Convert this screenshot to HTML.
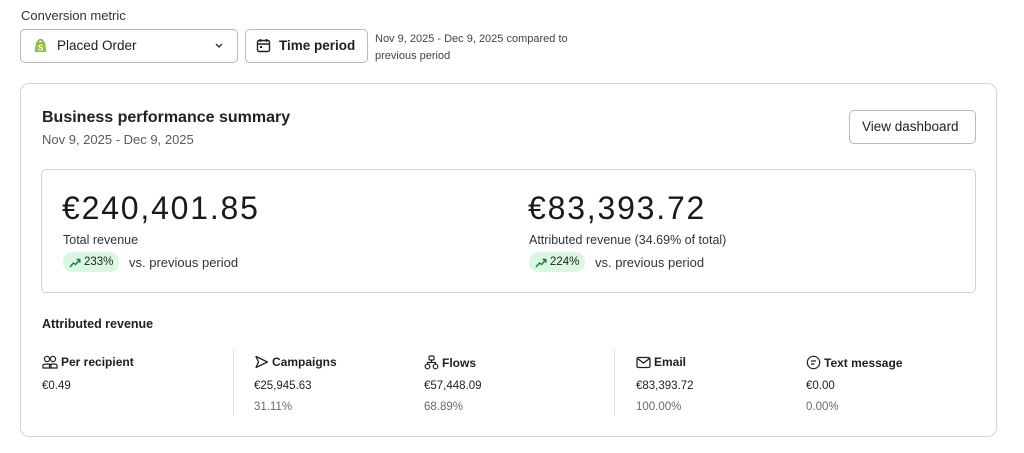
<!DOCTYPE html>
<html><head><meta charset="utf-8"><style>
*{box-sizing:border-box;margin:0;padding:0}
body{width:1024px;height:453px;background:#fff;font-family:"Liberation Sans",sans-serif;color:#1f1f1f;position:relative;overflow:hidden}
.a{position:absolute;white-space:nowrap}
.box{position:absolute;border:1px solid #b8b8b8;border-radius:5px;background:#fff}
.g{color:#5a5a5a}
.pill{position:absolute;background:#d9f7e2;border-radius:9px;height:20px;font-size:11.5px;color:#1f1f1f;padding:0 6px 0 6px;line-height:20px}
.pill svg{vertical-align:-3px;margin-right:3px}
.h{font-size:12px;font-weight:bold}
.h svg{vertical-align:-3px;margin-right:3px}
.v{font-size:11.5px}
.p{font-size:11.5px;color:#6a6a6a}
.div{position:absolute;width:1px;background:#e3e3e3;top:348px;height:68px}
</style></head><body>
<div class="a" style="left:21px;top:8px;font-size:13px;color:#333">Conversion metric</div>
<div class="box" style="left:20px;top:29px;width:218px;height:34px"></div>
<svg class="a" style="left:34px;top:38px" width="13" height="15" viewBox="0 0 13 15"><path d="M2 4 L11 4 L12.5 14 L0.5 14 Z" fill="#95bf47"/><path d="M4 4 C4 1 9 1 9 4" stroke="#5e8e3e" stroke-width="1.3" fill="none"/><text x="4" y="12.5" font-size="8" font-weight="bold" fill="#fff" font-family="Liberation Sans">S</text></svg>
<div class="a" style="left:57px;top:38px;font-size:13.5px">Placed Order</div>
<svg class="a" style="left:214px;top:42px" width="10" height="8" viewBox="0 0 10 8"><path d="M2 2 L5 5 L8 2" stroke="#333" stroke-width="1.4" fill="none"/></svg>
<div class="box" style="left:245px;top:29px;width:123px;height:34px"></div>
<svg class="a" style="left:256px;top:38px" width="15" height="15" viewBox="0 0 15 15"><rect x="1.5" y="2.5" width="12" height="11" rx="1.5" stroke="#222" stroke-width="1.4" fill="none"/><path d="M4.5 1v3M10.5 1v3M1.5 6h12" stroke="#222" stroke-width="1.4"/><rect x="4" y="8" width="2" height="2" fill="#222"/></svg>
<div class="a" style="left:279px;top:38px;font-size:13.5px;font-weight:bold">Time period</div>
<div class="a" style="left:375px;top:31px;font-size:11px;line-height:17px;color:#444">Nov 9, 2025 - Dec 9, 2025 compared to<br>previous period</div>

<div class="a" style="left:20px;top:83px;width:977px;height:354px;border:1px solid #d4d4d4;border-radius:9px"></div>
<div class="a" style="left:42px;top:109px;font-size:16px;font-weight:bold;color:#222">Business performance summary</div>
<div class="a g" style="left:42px;top:132px;font-size:13px">Nov 9, 2025 - Dec 9, 2025</div>
<div class="box" style="left:849px;top:110px;width:127px;height:34px"></div>
<div class="a" style="left:862px;top:119px;font-size:13.5px;color:#222">View dashboard</div>

<div class="a" style="left:41px;top:169px;width:935px;height:124px;border:1px solid #d4d4d4;border-radius:5px"></div>
<div class="a" style="left:62px;top:190px;font-size:32px;color:#1a1a1a;letter-spacing:1.8px">€240,401.85</div>
<div class="a" style="left:63px;top:233px;font-size:12.5px;color:#333">Total revenue</div>
<div class="pill" style="left:63px;top:252px"><svg width="12" height="10" viewBox="0 0 12 10"><path d="M1 9 L4.5 5 L6.5 6.5 L10.5 2 M7.5 1.5 H10.8 V4.8" stroke="#1a7f37" stroke-width="1.4" fill="none"/></svg>233%</div>
<div class="a" style="left:129px;top:255px;font-size:13px;color:#333">vs. previous period</div>
<div class="a" style="left:528px;top:190px;font-size:32px;color:#1a1a1a;letter-spacing:1.8px">€83,393.72</div>
<div class="a" style="left:529px;top:233px;font-size:12.5px;color:#333">Attributed revenue (34.69% of total)</div>
<div class="pill" style="left:529px;top:252px"><svg width="12" height="10" viewBox="0 0 12 10"><path d="M1 9 L4.5 5 L6.5 6.5 L10.5 2 M7.5 1.5 H10.8 V4.8" stroke="#1a7f37" stroke-width="1.4" fill="none"/></svg>224%</div>
<div class="a" style="left:595px;top:255px;font-size:13px;color:#333">vs. previous period</div>

<div class="a" style="left:42px;top:317px;font-size:12.5px;font-weight:bold;color:#222">Attributed revenue</div>
<div class="div" style="left:233px"></div>
<div class="div" style="left:614px"></div>

<div class="a h" style="left:42px;top:355px"><svg width="16" height="14" viewBox="0 0 16 14"><circle cx="5" cy="4" r="2.6" stroke="#222" stroke-width="1.2" fill="none"/><circle cx="11" cy="4" r="2.6" stroke="#222" stroke-width="1.2" fill="none"/><path d="M1 13 V10.5 C1 8.5 9 8.5 9 10.5 V13 Z M7.5 13 V10.5 C7.5 8.5 15 8.5 15 10.5 V13 Z" stroke="#222" stroke-width="1.2" fill="none"/></svg>Per recipient</div>
<div class="a v" style="left:42px;top:380px">€0.49</div>

<div class="a h" style="left:254px;top:355px"><svg width="15" height="14" viewBox="0 0 15 14"><path d="M2 1.5 L13.5 7 L2 12.5 L4.5 7 Z" stroke="#222" stroke-width="1.3" fill="none" stroke-linejoin="round"/></svg>Campaigns</div>
<div class="a v" style="left:254px;top:380px">€25,945.63</div>
<div class="a p" style="left:254px;top:401px">31.11%</div>

<div class="a h" style="left:424px;top:355px"><svg width="15" height="15" viewBox="0 0 15 15"><rect x="5" y="1" width="5" height="4" rx="1" stroke="#222" stroke-width="1.2" fill="none"/><circle cx="3.5" cy="11.5" r="2.3" stroke="#222" stroke-width="1.2" fill="none"/><circle cx="11.5" cy="11.5" r="2.3" stroke="#222" stroke-width="1.2" fill="none"/><path d="M7.5 5 V7 M3.5 9 V7.5 H11.5 V9" stroke="#222" stroke-width="1.2" fill="none"/></svg>Flows</div>
<div class="a v" style="left:424px;top:380px">€57,448.09</div>
<div class="a p" style="left:424px;top:401px">68.89%</div>

<div class="a h" style="left:636px;top:355px"><svg width="15" height="13" viewBox="0 0 15 13"><rect x="1" y="1.5" width="13" height="10" rx="1.5" stroke="#222" stroke-width="1.3" fill="none"/><path d="M1.5 2.5 L7.5 7 L13.5 2.5" stroke="#222" stroke-width="1.3" fill="none"/></svg>Email</div>
<div class="a v" style="left:636px;top:380px">€83,393.72</div>
<div class="a p" style="left:636px;top:401px">100.00%</div>

<div class="a h" style="left:806px;top:355px"><svg width="15" height="15" viewBox="0 0 15 15"><circle cx="7.5" cy="7.5" r="6.2" stroke="#222" stroke-width="1.2" fill="none"/><path d="M5 6 H10 M5 9 H8.5" stroke="#222" stroke-width="1.2"/></svg>Text message</div>
<div class="a v" style="left:806px;top:380px">€0.00</div>
<div class="a p" style="left:806px;top:401px">0.00%</div>
</body></html>
